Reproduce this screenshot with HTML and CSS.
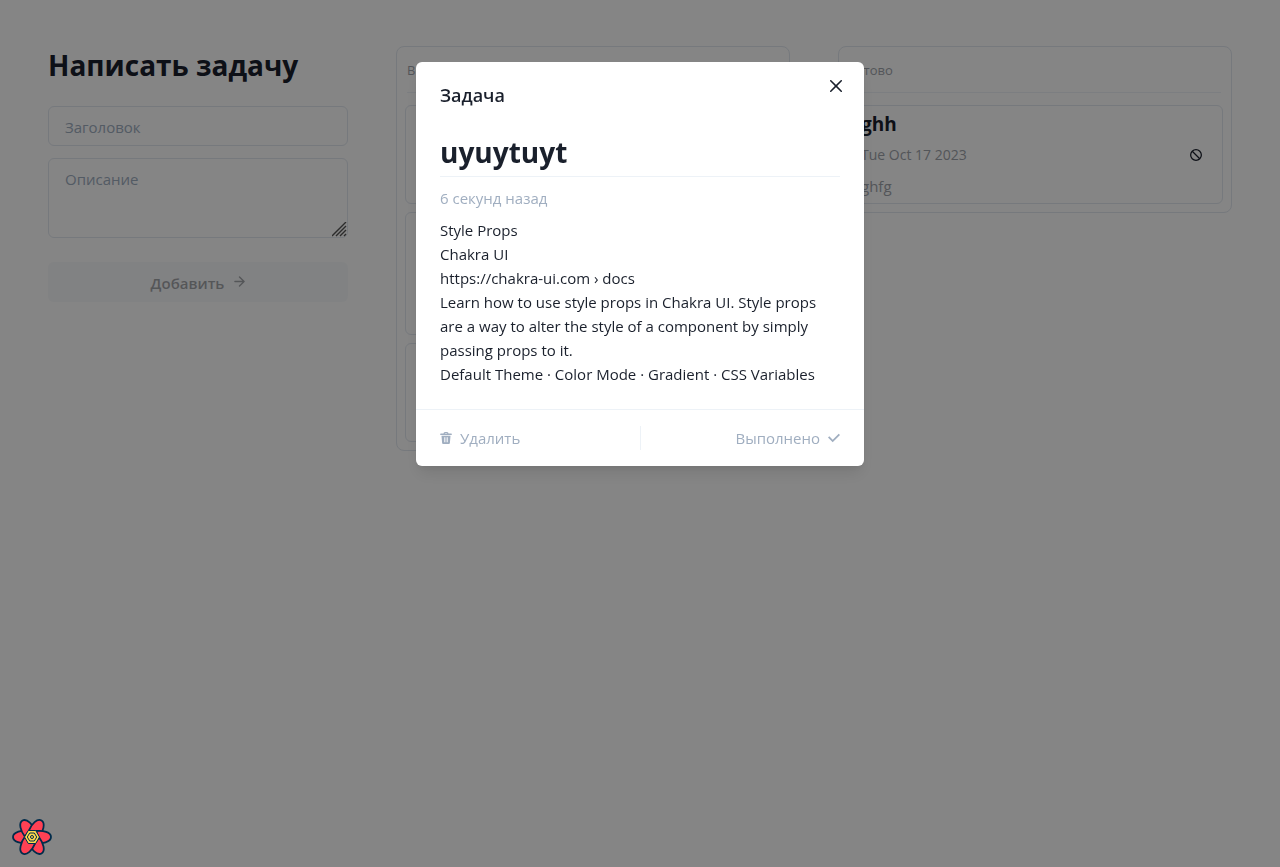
FILE: index.html
```html
<!DOCTYPE html>
<html lang="ru">
<head>
<meta charset="utf-8">
<meta name="viewport" content="width=device-width, initial-scale=1">
<title>Задачи</title>
<link rel="stylesheet" href="styles.css">
</head>
<body>
<main class="page">
  <form class="task-form">
    <h1 class="form-title">Написать задачу</h1>
    <input class="field" type="text" placeholder="Заголовок" aria-label="Заголовок">
    <div class="area-wrap">
      <textarea class="field area" placeholder="Описание" aria-label="Описание"></textarea>
      <svg class="grip" viewBox="0 0 15 15" aria-hidden="true"><path d="M0 14 14 0M4 14 14 4M8 14l6-6M12 14l2-2"/></svg>
    </div>
    <button class="submit" type="submit" disabled>
      <span>Добавить</span>
      <svg class="arrow" viewBox="0 0 24 24" aria-hidden="true"><path d="M2 12h20M12 2l10 10-10 10"/></svg>
    </button>
  </form>
  <section class="board">
    <h2 class="board-title">В работе</h2>
    <ul class="cards">
      <li class="card"></li>
      <li class="card card-tall"></li>
      <li class="card"></li>
    </ul>
  </section>
  <section class="board">
    <h2 class="board-title">Готово</h2>
    <ul class="cards">
      <li class="card">
        <div class="card-body">
          <h3 class="card-title">ghh</h3>
          <p class="card-date">Tue Oct 17 2023</p>
          <p class="card-text">ghfg</p>
        </div>
        <button class="icon-button" type="button" aria-label="Отменить">
          <svg class="ban" viewBox="0 0 24 24" aria-hidden="true"><circle cx="12" cy="12" r="10.7"/><path d="M4.5 4.5l15 15"/></svg>
        </button>
      </li>
    </ul>
  </section>
</main>
<div class="overlay">
  <div class="modal" role="dialog" aria-modal="true" aria-labelledby="modal-title">
    <header class="modal-header" id="modal-title">Задача</header>
    <button class="close" type="button" aria-label="Закрыть">
      <svg viewBox="0 0 24 24" aria-hidden="true"><path fill="currentColor" d="M.439,21.44a1.5,1.5,0,0,0,2.122,2.121L11.823,14.3a.25.25,0,0,1,.354,0l9.262,9.263a1.5,1.5,0,1,0,2.122-2.121L14.3,12.177a.25.25,0,0,1,0-.354l9.263-9.262A1.5,1.5,0,0,0,21.439.44L12.177,9.7a.25.25,0,0,1-.354,0L2.561.44A1.5,1.5,0,0,0,.439,2.561L9.7,11.823a.25.25,0,0,1,0,.354Z"/></svg>
    </button>
    <div class="modal-body">
      <h2 class="task-title">uyuytuyt</h2>
      <p class="task-time">6 секунд назад</p>
      <p class="task-text">Style Props<br>Chakra UI<br>https://chakra-ui.com › docs<br>Learn how to use style props in Chakra UI. Style props are a way to alter the style of a component by simply passing props to it.<br>Default Theme · Color Mode · Gradient · CSS Variables</p>
    </div>
    <footer class="modal-footer">
      <button class="action" type="button">
        <svg viewBox="0 0 24 24" aria-hidden="true"><path fill="currentColor" fill-rule="evenodd" d="M7 3Q7 0 10 0h4q3 0 3 3h5q2 0 2 1.5T22 6H2Q0 6 0 4.500T2 3zm2.500 0h5q0-1-1-1h-3q-1 0-1 1zM3 7.500h18L19.800 22q-.2 2-2 2H6.200q-1.800 0-2-2zM8 10.500v10h1.400v-10zm3.300 0v10h1.400v-10zm3.300 0v10H16v-10z"/></svg>
        <span>Удалить</span>
      </button>
      <button class="action action-end" type="button">
        <span>Выполнено</span>
        <svg viewBox="0 0 14 14" aria-hidden="true"><path fill="currentColor" d="M5.5 11.9993304L14 3.49933039 12.5 2 5.5 8.99933039 1.5 4.9968652 0 6.49933039z"/></svg>
      </button>
    </footer>
  </div>
</div>
<button class="devtools" type="button" aria-label="React Query Devtools">
  <svg viewBox="0 0 40 40" aria-hidden="true">
    <g fill="#ff4154" stroke="#002c4b" stroke-width="1.8" stroke-linejoin="round">
      <path id="petal" d="M13.500 20 17.500 13.800C10 12.800 1 15 1 20c0 5 8 6.800 15 6z"/>
      <use href="#petal" transform="rotate(60 20 20)"/>
      <use href="#petal" transform="rotate(120 20 20)"/>
      <use href="#petal" transform="rotate(180 20 20)"/>
      <use href="#petal" transform="rotate(240 20 20)"/>
      <use href="#petal" transform="rotate(300 20 20)"/>
    </g>
    <path fill="#ffd94c" stroke="#002c4b" d="M16.300 13.500h7.400l3.800 6.500-3.800 6.500h-7.400L12.500 20z"/>
    <path fill="none" stroke="#002c4b" d="M17.700 16h4.600l2.400 4-2.400 4h-4.600l-2.400-4z"/>
    <circle fill="none" stroke="#002c4b" cx="20" cy="20" r="1.500"/>
  </svg>
</button>
</body>
</html>
```
FILE: styles.css
```css
* { box-sizing: border-box; margin: 0; padding: 0; }
body {
  font-family: "Segoe UI", "Open Sans", "Noto Sans", sans-serif;
  font-size: 15px;
  line-height: 24px;
  color: #1a202c;
  background: #fff;
}
button, input, textarea { font: inherit; color: inherit; }
button { border: 0; background: none; cursor: pointer; }
svg { display: block; flex: none; }

.page {
  display: grid;
  grid-template-columns: 300px 1fr 1fr;
  align-items: start;
  gap: 48px;
  padding: 46px 48px;
}
.task-form { display: flex; flex-direction: column; gap: 12px; }
.form-title { font-size: 28px; line-height: 38px; margin-bottom: 10px; white-space: nowrap; }
.field {
  display: block;
  width: 100%;
  height: 40px;
  padding: 1px 16px 0;
  border: 1px solid #e2e8f0;
  border-radius: 6px;
  background: none;
}
.field::placeholder { color: #a0aec0; }
.area-wrap { position: relative; }
.area { height: 80px; padding: 8px 16px; resize: none; }
.grip {
  position: absolute;
  right: 1px;
  bottom: 1px;
  width: 15px;
  height: 15px;
  stroke: #555;
  stroke-width: 1.4;
}
.submit {
  display: flex;
  align-items: center;
  justify-content: center;
  gap: 10px;
  height: 40px;
  margin-top: 12px;
  padding-top: 1px;
  border-radius: 6px;
  background: #edf2f7;
  font-weight: 600;
  opacity: 0.4;
}
.arrow {
  width: 11px;
  height: 11px;
  margin-bottom: 3px;
  fill: none;
  stroke: currentColor;
  stroke-width: 3;
  stroke-linecap: round;
  stroke-linejoin: round;
}

.board { padding: 8px; border: 1px solid #e2e8f0; border-radius: 8px; }
.board-title {
  margin: 0 2px 12px;
  padding: 3px 0 10px;
  border-bottom: 1px solid #edf2f7;
  font-size: 13px;
  font-weight: 400;
  color: #a0a4ab;
}
.cards { display: flex; flex-direction: column; gap: 8px; list-style: none; }
.card {
  display: flex;
  align-items: center;
  justify-content: space-between;
  min-height: 99px;
  padding: 4px 20px 4px 13px;
  border: 1px solid #e2e8f0;
  border-radius: 6px;
}
.card-tall { min-height: 123px; }
.card-body { display: flex; flex-direction: column; gap: 7px; }
.card-title { font-size: 19px; line-height: 24px; }
.card-date { font-size: 14px; color: #a0a4ab; }
.card-text { color: #a0a4ab; }
.ban { width: 12px; height: 12px; fill: none; stroke: currentColor; stroke-width: 2.5; }

.overlay {
  position: fixed;
  inset: 0;
  display: flex;
  align-items: flex-start;
  justify-content: center;
  padding-top: 62px;
  background: rgba(0, 0, 0, 0.48);
}
.modal {
  position: relative;
  width: 100%;
  max-width: 448px;
  border-radius: 6px;
  background: #fff;
  box-shadow: 0 10px 15px -3px rgba(0, 0, 0, 0.1), 0 4px 6px -2px rgba(0, 0, 0, 0.05);
}
.modal-header { padding: 20px 24px 16px; font-size: 18px; font-weight: 600; line-height: 26px; }
.close {
  position: absolute;
  top: 8px;
  right: 12px;
  display: flex;
  align-items: center;
  justify-content: center;
  width: 32px;
  height: 32px;
}
.close svg { width: 12px; height: 12px; }
.modal-body { padding: 8px 24px 23px; }
.task-title { padding-bottom: 4px; border-bottom: 1px solid #edf2f7; font-size: 28px; line-height: 40px; }
.task-time { margin: 9px 0 8px; color: #a0aec0; }
.modal-footer { display: flex; padding: 16px 24px; border-top: 1px solid #edf2f7; }
.action { display: flex; flex: 1; align-items: center; gap: 8px; color: #a0aec0; }
.action-end { justify-content: flex-end; border-left: 1px solid #edf2f7; }
.action svg { width: 12px; height: 12px; }

.devtools { position: fixed; left: 12px; bottom: 10px; }
.devtools svg { width: 40px; height: 40px; }
```
